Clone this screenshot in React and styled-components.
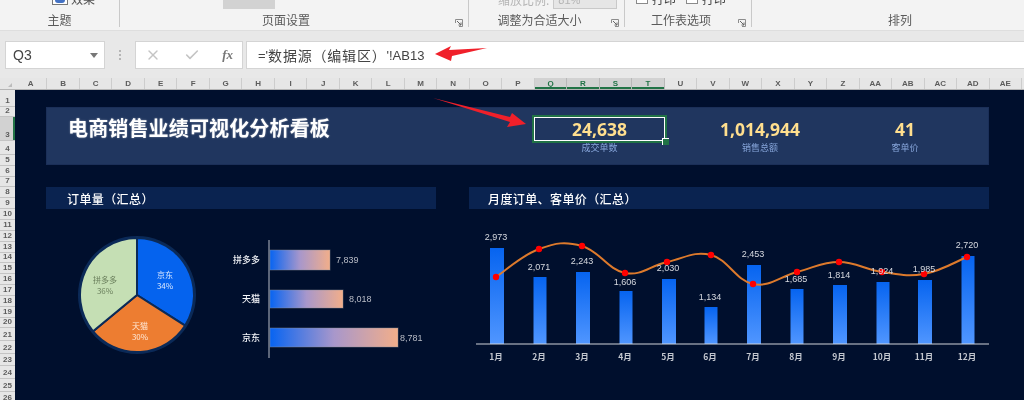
import React from "react";
import styled, { createGlobalStyle } from "styled-components";
import { X, Check } from "lucide-react";

const CJK = `"Noto Sans CJK SC", "Noto Sans", sans-serif`;
const LATIN = `"Liberation Sans", "Noto Sans CJK SC", sans-serif`;

const Global = createGlobalStyle`
  html, body { margin: 0; padding: 0; background: #f3f3f3; }
  * { box-sizing: border-box; }
`;

const Page = styled.div`
  position: relative;
  width: 1024px;
  height: 400px;
  overflow: hidden;
  display: flex;
  flex-direction: column;
  background: #e8e8e8;
  font-family: ${CJK};
  filter: blur(0.35px);
`;

/* ribbon */
const Ribbon = styled.div`
  display: flex;
  height: 31px;
  padding-bottom: 3px;
  background: #f3f3f3;
  border-bottom: 1px solid #dedede;
`;
const Group = styled.div`
  position: relative;
  flex: ${p => (p.$w ? `0 0 ${p.$w}px` : "1")};
  display: flex;
  flex-direction: column;
  border-right: ${p => (p.$w ? "1px solid #c9c9c9" : "none")};
`;
const Tools = styled.div`
  flex: none;
  height: 9px;
  margin-bottom: 3px;
  overflow: hidden;
  display: flex;
  align-items: flex-end;
  padding-left: ${p => p.$left || 0}px;
  gap: ${p => p.$gap || 0}px;
  color: #555;
  font-size: 12px;
`;
const GroupLabel = styled.div`
  font-size: 12px;
  line-height: 15px;
  color: #5a5a5a;
  text-align: center;
  padding: 0 ${p => p.$right || 0}px 0 ${p => p.$left || 0}px;
`;
const Launcher = styled.svg`
  position: absolute;
  right: 5px;
  bottom: 0;
  width: 8px;
  height: 8px;
`;
const EffectItem = styled.div`
  display: flex;
  align-items: flex-start;
  gap: 3px;
  height: 9px;
  align-self: flex-start;
`;
const EffectIcon = styled.span`
  width: 16px;
  height: 5px;
  border: 1px solid #777;
  border-top: none;
  background: #fff;
  display: flex;
  justify-content: center;
  &::after {
    content: "";
    width: 10px;
    height: 3px;
    border-radius: 0 0 6px 6px;
    background: #4472c4;
  }
`;
const EffectText = styled.span`
  font-size: 12px;
  line-height: 9px;
  transform: translateY(-6px);
`;
const PressedButton = styled.div`
  width: 52px;
  height: 9px;
  background: #d2d2d2;
`;
const DimText = styled.span`
  color: #b4b4b4;
  font-size: 12px;
  line-height: 9px;
  align-self: flex-start;
  transform: translateY(-5px);
`;
const ScaleBox = styled.div`
  width: 64px;
  height: 9px;
  background: #e6e6e6;
  border: 1px solid #c9c9c9;
  border-top: none;
  color: #b4b4b4;
  font: 11px/1px ${LATIN};
  padding-left: 4px;
  overflow: hidden;
`;
const Tick = styled.span`
  width: 12px;
  height: 4px;
  border: 1px solid #8a8a8a;
  border-top: none;
  background: #fff;
`;
const TickRow = styled.div`
  display: flex;
  align-items: flex-start;
  gap: 4px;
  height: 9px;
`;
const TickText = styled.span`
  font-size: 12px;
  line-height: 9px;
  color: #444;
  transform: translateY(-6px);
`;

/* formula bar */
const FormulaBar = styled.div`
  display: flex;
  align-items: stretch;
  height: 28px;
  margin: 10px 0 9px;
  padding-left: 5px;
`;
const NameBox = styled.div`
  flex: 0 0 100px;
  display: flex;
  align-items: center;
  justify-content: space-between;
  padding: 0 6px 0 7px;
  background: #fff;
  border: 1px solid #d4d4d4;
  font: 14px ${LATIN};
  color: #444;
`;
const Caret = styled.span`
  border: 4px solid transparent;
  border-top: 5px solid #777;
  border-bottom: none;
`;
const Grip = styled.div`
  flex: 0 0 30px;
  display: flex;
  flex-direction: column;
  align-items: center;
  justify-content: center;
  gap: 2px;
  & > i {
    width: 2px;
    height: 2px;
    background: #b5b5b5;
  }
`;
const FnBox = styled.div`
  flex: 0 0 108px;
  display: flex;
  align-items: center;
  justify-content: space-between;
  padding: 0 9px 0 9px;
  background: #fff;
  border: 1px solid #d4d4d4;
  color: #c4c4c4;
`;
const Fx = styled.span`
  font: italic bold 13px "Liberation Serif", serif;
  color: #777;
`;
const Formula = styled.div`
  flex: 1;
  margin-left: 3px;
  display: flex;
  align-items: center;
  padding-left: 11px;
  background: #fff;
  border: 1px solid #d4d4d4;
  border-right: none;
  color: #444;
  font: 13px ${LATIN};
`;
const FormulaCjk = styled.span`
  font: 14px ${CJK};
  letter-spacing: .8px;
`;

/* headers */
const ColHeader = styled.div`
  display: flex;
  height: 12px;
  background: #e6e6e6;
  border-bottom: 1px solid #b5b5b5;
`;
const Corner = styled.div`
  flex: 0 0 15px;
  display: flex;
  align-items: center;
  justify-content: flex-end;
  padding: 3px 3px 0 0;
  &::after {
    content: "";
    border-left: 4px solid transparent;
    border-bottom: 4px solid #bcbcbc;
  }
`;
const ColCell = styled.div`
  flex: 0 0 32.49px;
  display: flex;
  align-items: center;
  justify-content: center;
  font: bold 8px ${LATIN};
  color: ${p => (p.$on ? "#217346" : "#5c5c5c")};
  background: ${p => (p.$on ? "#d2d2d2" : "transparent")};
  border-right: 1px solid ${p => (p.$on ? "#b8b8b8" : "#cdcdcd")};
  box-shadow: ${p => (p.$on ? "inset 0 -2px 0 #217346" : "none")};
`;
const Sheet = styled.div`
  flex: 1;
  display: flex;
  min-height: 0;
`;
const RowHeader = styled.div`
  flex: 0 0 15px;
  background: #e6e6e6;
  overflow: hidden;
`;
const RowCell = styled.div`
  display: flex;
  align-items: flex-end;
  justify-content: center;
  font: bold 8px/10px ${LATIN};
  color: #5c5c5c;
  border-bottom: 1px solid #c4c4c4;
  background: ${p => (p.$on ? "#d2d2d2" : "transparent")};
  box-shadow: ${p => (p.$on ? "inset -2px 0 0 #217346" : "none")};
`;

/* dashboard */
const Board = styled.div`
  flex: 1;
  background: #000f2d;
  padding: 17px 0 0 31px;
  display: flex;
  flex-direction: column;
  min-width: 0;
`;
const Banner = styled.div`
  flex: 0 0 58px;
  width: 943px;
  display: flex;
  background: #20365f;
  border: 1px solid #1b2f58;
`;
const Title = styled.div`
  flex: 0 0 487px;
  padding: 5px 0 0 21px;
  font-size: 20px;
  font-weight: 700;
  line-height: 29px;
  letter-spacing: .15px;
  color: #fff;
  text-shadow: 0 0 2px rgba(255, 255, 255, .45);
`;
const Kpi = styled.div`
  flex: 0 0 ${p => p.$w}px;
  display: flex;
  flex-direction: column;
  align-items: center;
  padding-top: 9px;
`;
const KpiValue = styled.div`
  position: relative;
  width: 100%;
  height: 24px;
  display: flex;
  align-items: center;
  justify-content: center;
  font: 700 17.5px "Open Sans", sans-serif;
  color: #ffdf8e;
  ${p => p.$selected && `
    border: 1px solid #fff;
    box-shadow: 0 0 0 2px #217346;
    &::after {
      content: "";
      position: absolute;
      right: -5px;
      bottom: -5px;
      width: 6px;
      height: 6px;
      background: #217346;
      border: 1px solid #fff;
      border-width: 1px 0 0 1px;
    }
  `}
`;
const KpiLabel = styled.div`
  margin-top: 1px;
  font-size: 9px;
  line-height: 12px;
  color: #86a5da;
`;
const SectionRow = styled.div`
  display: flex;
  gap: 33px;
  margin-top: 22px;
`;
const SectionTitle = styled.div`
  flex: 0 0 ${p => p.$w}px;
  height: 22px;
  padding-left: ${p => p.$left}px;
  background: #0a2350;
  color: #fff;
  font-size: 12px;
  font-weight: 500;
  line-height: 23px;
  letter-spacing: .4px;
`;
const ChartRow = styled.div`
  flex: 1;
  display: flex;
  gap: 33px;
`;
const ChartSvg = styled.svg`
  flex: 0 0 auto;
  display: block;
  font-family: ${CJK};
`;
const Arrows = styled.svg`
  position: absolute;
  left: 0;
  top: 0;
  pointer-events: none;
`;

const cols = "A B C D E F G H I J K L M N O P Q R S T U V W X Y Z AA AB AC AD AE".split(" ");
const rowH = [17, 10, 24, 14, 11, 11, 10, 11, 11, 11, 11, 11, 11, 10, 11, 11, 11, 11, 11, 10, 13, 13, 12, 13, 13, 12];

const cx = 137, cy = 295, r = 57;
const pt = (deg, rad = r) => {
  const a = (deg - 90) * Math.PI / 180;
  return [cx + rad * Math.cos(a), cy + rad * Math.sin(a)];
};
const slice = (a, b) => {
  const [x1, y1] = pt(a), [x2, y2] = pt(b);
  return `M${cx} ${cy}L${x1} ${y1}A${r} ${r} 0 ${b - a > 180 ? 1 : 0} 1 ${x2} ${y2}Z`;
};
const pie = [
  { a: 0, b: 122.4, c: "#0563ee", tc: "#dbe8ff", n: "京东", p: "34%", x: 165, y: 275 },
  { a: 122.4, b: 230.4, c: "#ed7d31", tc: "#ffe9d8", n: "天猫", p: "30%", x: 140, y: 326 },
  { a: 230.4, b: 360, c: "#c5dfb4", tc: "#6a7f5c", n: "拼多多", p: "36%", x: 105, y: 280 },
];
const hbars = [
  { n: "拼多多", v: "7,839", y: 250, h: 20, end: 330 },
  { n: "天猫", v: "8,018", y: 290, h: 18, end: 343 },
  { n: "京东", v: "8,781", y: 328, h: 19, end: 398 },
];
const months = [
  { m: "1月", x: 497, w: 14, top: 248, v: "2,973", vy: 237, lx: 496, ly: 277 },
  { m: "2月", x: 540, w: 13, top: 277, v: "2,071", vy: 267, lx: 539, ly: 249 },
  { m: "3月", x: 583, w: 14, top: 272, v: "2,243", vy: 261, lx: 582, ly: 246 },
  { m: "4月", x: 626, w: 13, top: 291, v: "1,606", vy: 282, lx: 625, ly: 273 },
  { m: "5月", x: 669, w: 14, top: 279, v: "2,030", vy: 268, lx: 667, ly: 262 },
  { m: "6月", x: 711, w: 13, top: 307, v: "1,134", vy: 297, lx: 711, ly: 255 },
  { m: "7月", x: 754, w: 14, top: 265, v: "2,453", vy: 254, lx: 753, ly: 284 },
  { m: "8月", x: 797, w: 13, top: 289, v: "1,685", vy: 279, lx: 797, ly: 272 },
  { m: "9月", x: 840, w: 14, top: 285, v: "1,814", vy: 275, lx: 839, ly: 262 },
  { m: "10月", x: 883, w: 13, top: 282, v: "1,924", vy: 271, lx: 882, ly: 272 },
  { m: "11月", x: 925, w: 14, top: 280, v: "1,985", vy: 269, lx: 924, ly: 274 },
  { m: "12月", x: 968, w: 13, top: 256, v: "2,720", vy: 245, lx: 967, ly: 257 },
];
const smooth = pts => {
  let d = `M${pts[0][0]} ${pts[0][1]}`;
  for (let i = 0; i < pts.length - 1; i++) {
    const p0 = pts[Math.max(i - 1, 0)], p1 = pts[i], p2 = pts[i + 1], p3 = pts[Math.min(i + 2, pts.length - 1)];
    const k = 0.2;
    d += `C${p1[0] + (p2[0] - p0[0]) * k} ${p1[1] + (p2[1] - p0[1]) * k} ${p2[0] - (p3[0] - p1[0]) * k} ${p2[1] - (p3[1] - p1[1]) * k} ${p2[0]} ${p2[1]}`;
  }
  return d;
};

const LauncherIcon = () => (
  <Launcher viewBox="0 0 8 8">
    <path d="M.5 4V.5H7.5V7.5H4" fill="none" stroke="#8c8c8c" />
    <path d="M2 2L6 6M6 3.5V6H3.5" fill="none" stroke="#666" />
  </Launcher>
);

export default function App() {
  return (
    <Page>
      <Global />
      <Ribbon>
        <Group $w={120}>
          <Tools $left={52}>
            <EffectItem>
              <EffectIcon />
              <EffectText>效果</EffectText>
            </EffectItem>
          </Tools>
          <GroupLabel>主题</GroupLabel>
        </Group>
        <Group $w={349}>
          <Tools $left={103}>
            <PressedButton />
          </Tools>
          <GroupLabel $right={16}>页面设置</GroupLabel>
          <LauncherIcon />
        </Group>
        <Group $w={156}>
          <Tools $left={29} $gap={4}>
            <DimText>缩放比例:</DimText>
            <ScaleBox>81%</ScaleBox>
          </Tools>
          <GroupLabel $right={14}>调整为合适大小</GroupLabel>
          <LauncherIcon />
        </Group>
        <Group $w={127}>
          <Tools $left={11} $gap={10}>
            <TickRow><Tick /><TickText>打印</TickText></TickRow>
            <TickRow><Tick /><TickText>打印</TickText></TickRow>
          </Tools>
          <GroupLabel $right={14}>工作表选项</GroupLabel>
          <LauncherIcon />
        </Group>
        <Group>
          <Tools />
          <GroupLabel $left={24}>排列</GroupLabel>
        </Group>
      </Ribbon>

      <FormulaBar>
        <NameBox>Q3<Caret /></NameBox>
        <Grip><i /><i /><i /></Grip>
        <FnBox>
          <X size={16} strokeWidth={2} />
          <Check size={16} strokeWidth={2.4} />
          <Fx>fx</Fx>
        </FnBox>
        <Formula>='<FormulaCjk>数据源（编辑区）</FormulaCjk>'!AB13</Formula>
      </FormulaBar>

      <ColHeader>
        <Corner />
        {cols.map((c, i) => (
          <ColCell key={c} $on={i >= 16 && i <= 19}>{c}</ColCell>
        ))}
      </ColHeader>

      <Sheet>
        <RowHeader>
          {rowH.map((h, i) => (
            <RowCell key={i} $on={i === 2} style={{ height: h }}>{i + 1}</RowCell>
          ))}
        </RowHeader>
        <Board>
          <Banner>
            <Title>电商销售业绩可视化分析看板</Title>
            <Kpi $w={131}>
              <KpiValue $selected>24,638</KpiValue>
              <KpiLabel>成交单数</KpiLabel>
            </Kpi>
            <Kpi $w={190}>
              <KpiValue>1,014,944</KpiValue>
              <KpiLabel>销售总额</KpiLabel>
            </Kpi>
            <Kpi $w={100}>
              <KpiValue>41</KpiValue>
              <KpiLabel>客单价</KpiLabel>
            </Kpi>
          </Banner>
          <SectionRow>
            <SectionTitle $w={390} $left={21}>订单量（汇总）</SectionTitle>
            <SectionTitle $w={520} $left={19}>月度订单、客单价（汇总）</SectionTitle>
          </SectionRow>
          <ChartRow>
            <ChartSvg width="390" height="191" viewBox="46 209 390 191">
              <defs>
                <linearGradient id="hb" x1="0" x2="1" y1="0" y2="0">
                  <stop offset="0" stopColor="#0764f2" />
                  <stop offset=".5" stopColor="#a897cb" />
                  <stop offset="1" stopColor="#f2ae8a" />
                </linearGradient>
              </defs>
              <circle cx={cx} cy={cy} r={r + 2} fill="#0b2a58" />
              {pie.map(s => (
                <path key={s.n} d={slice(s.a, s.b)} fill={s.c} stroke="#0b2a58" strokeWidth="2" />
              ))}
              {pie.map(s => (
                <g key={s.n} fill={s.tc} textAnchor="middle" fontSize="8">
                  <text x={s.x} y={s.y + 3}>{s.n}</text>
                  <text x={s.x} y={s.y + 14}>{s.p}</text>
                </g>
              ))}
              <line x1="269" x2="269" y1="240" y2="358" stroke="#b8bdc6" strokeWidth="1" />
              {hbars.map(b => (
                <g key={b.n}>
                  <rect x="270" y={b.y} width={b.end - 270} height={b.h} fill="url(#hb)" stroke="#8a8f9a" strokeOpacity=".45" strokeWidth="1" />
                  <text x="260" y={b.y + b.h / 2 + 3} textAnchor="end" fontSize="9" fontWeight="500" fill="#f4f6fa">{b.n}</text>
                  <text x={b.end + (b.end > 390 ? 2 : 6)} y={b.y + b.h / 2 + 3} fontSize="9" fill="#b8bcc6" fontFamily={LATIN}>{b.v}</text>
                </g>
              ))}
            </ChartSvg>
            <ChartSvg width="520" height="191" viewBox="469 209 520 191">
              <defs>
                <linearGradient id="vb" x1="0" x2="0" y1="0" y2="1">
                  <stop offset="0" stopColor="#0664f0" />
                  <stop offset="1" stopColor="#5096ff" />
                </linearGradient>
              </defs>
              {months.map(d => (
                <rect key={d.m} x={d.x - d.w / 2} y={d.top} width={d.w} height={344 - d.top} fill="url(#vb)" />
              ))}
              <line x1="476" x2="990" y1="344" y2="344" stroke="#d0d4da" strokeWidth="1" />
              <path d={smooth(months.map(d => [d.lx, d.ly]))} fill="none" stroke="#dd7a2c" strokeWidth="2" />
              {months.map(d => (
                <circle key={d.m} cx={d.lx} cy={d.ly} r="3.2" fill="#f00" />
              ))}
              {months.map(d => (
                <g key={d.m} textAnchor="middle">
                  <text x={d.x - 1} y={d.vy + 3} fontSize="9" fill="#d7dae0" fontFamily={LATIN}>{d.v}</text>
                  <text x={d.x - 1} y={360} fontSize="8.5" fontWeight="700" fill="#c3c7cf">{d.m}</text>
                </g>
              ))}
            </ChartSvg>
          </ChartRow>
        </Board>
      </Sheet>

      <Arrows width="1024" height="400" viewBox="0 0 1024 400">
        <polygon points="435,54 451,46 449,50 487,48 452,56 451,61" fill="#f0202a" />
        <polygon points="433,98 510,117 512,113 526,124 507,127 510,122" fill="#f0202a" />
      </Arrows>
    </Page>
  );
}
